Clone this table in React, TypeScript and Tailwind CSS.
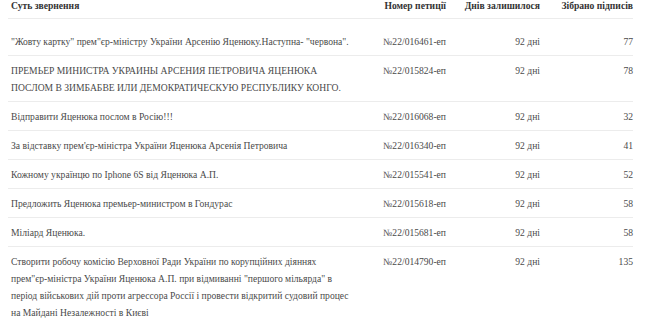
import React from "react";

const rows: { t: React.ReactNode; n: string; d: string; s: string; first?: boolean }[] = [
  { t: <>"Жовту картку" прем"єр-міністру України Арсенію Яценюку.Наступна- "червона".</>, n: "№22/016461-еп", d: "92 дні", s: "77", first: true },
  { t: <>ПРЕМЬЕР МИНИСТРА УКРАИНЫ АРСЕНИЯ ПЕТРОВИЧА ЯЦЕНЮКА<br />ПОСЛОМ В ЗИМБАБВЕ ИЛИ ДЕМОКРАТИЧЕСКУЮ РЕСПУБЛИКУ КОНГО.</>, n: "№22/015824-еп", d: "92 дні", s: "78" },
  { t: <>Відправити Яценюка послом в Росію!!!</>, n: "№22/016068-еп", d: "92 дні", s: "32" },
  { t: <>За відставку прем'єр-міністра України Яценюка Арсенія Петровича</>, n: "№22/016340-еп", d: "92 дні", s: "41" },
  { t: <>Кожному українцю по Iphone 6S від Яценюка А.П.</>, n: "№22/015541-еп", d: "92 дні", s: "52" },
  { t: <>Предложить Яценюка премьер-министром в Гондурас</>, n: "№22/015618-еп", d: "92 дні", s: "58" },
  { t: <>Міліард Яценюка.</>, n: "№22/015681-еп", d: "92 дні", s: "58" },
  { t: <>Створити робочу комісію Верховної Ради України по корупційних діяннях<br />прем"єр-міністра України Яценюка А.П. при відмиванні "першого мільярда" в<br />період військових дій проти агрессора Россії і провести відкритий судовий процес<br />на Майдані Незалежності в Києві</>, n: "№22/014790-еп", d: "92 дні", s: "135" },
];

export default function App() {
  return (
    <div className="w-[650px] h-[319px] overflow-hidden bg-white font-['Liberation_Serif',serif]">
      <table className="ml-[8px] w-[625px] table-fixed border-collapse text-[9.6px] text-[#4a4a4a] font-['Liberation_Serif',serif]">
        <colgroup>
          <col className="w-[352px]" />
          <col className="w-[86px]" />
          <col className="w-[94px]" />
          <col className="w-[93px]" />
        </colgroup>
        <thead>
          <tr className="border-b border-[#ececec] text-[#333] font-bold leading-[12px]">
            <th className="text-left pl-[3px] pt-0 pb-[6px]">Суть звернення</th>
            <th className="text-right pt-0 pb-[6px]">Номер петиції</th>
            <th className="text-right pt-0 pb-[6px]">Днів залишилося</th>
            <th className="text-right pt-0 pb-[6px]">Зібрано підписів</th>
          </tr>
        </thead>
        <tbody>
          {rows.map((r, i) => {
            const pt = r.first ? "pt-[14px]" : "pt-[6px]";
            return (
              <tr key={i} className="border-b border-[#ececec] leading-[17px] align-top">
                <td className={`pl-[3px] pb-[5px] ${pt} whitespace-nowrap`}>{r.t}</td>
                <td className={`text-right pb-[5px] ${pt}`}>{r.n}</td>
                <td className={`text-right pb-[5px] ${pt}`}>{r.d}</td>
                <td className={`text-right pb-[5px] ${pt}`}>{r.s}</td>
              </tr>
            );
          })}
        </tbody>
      </table>
    </div>
  );
}
